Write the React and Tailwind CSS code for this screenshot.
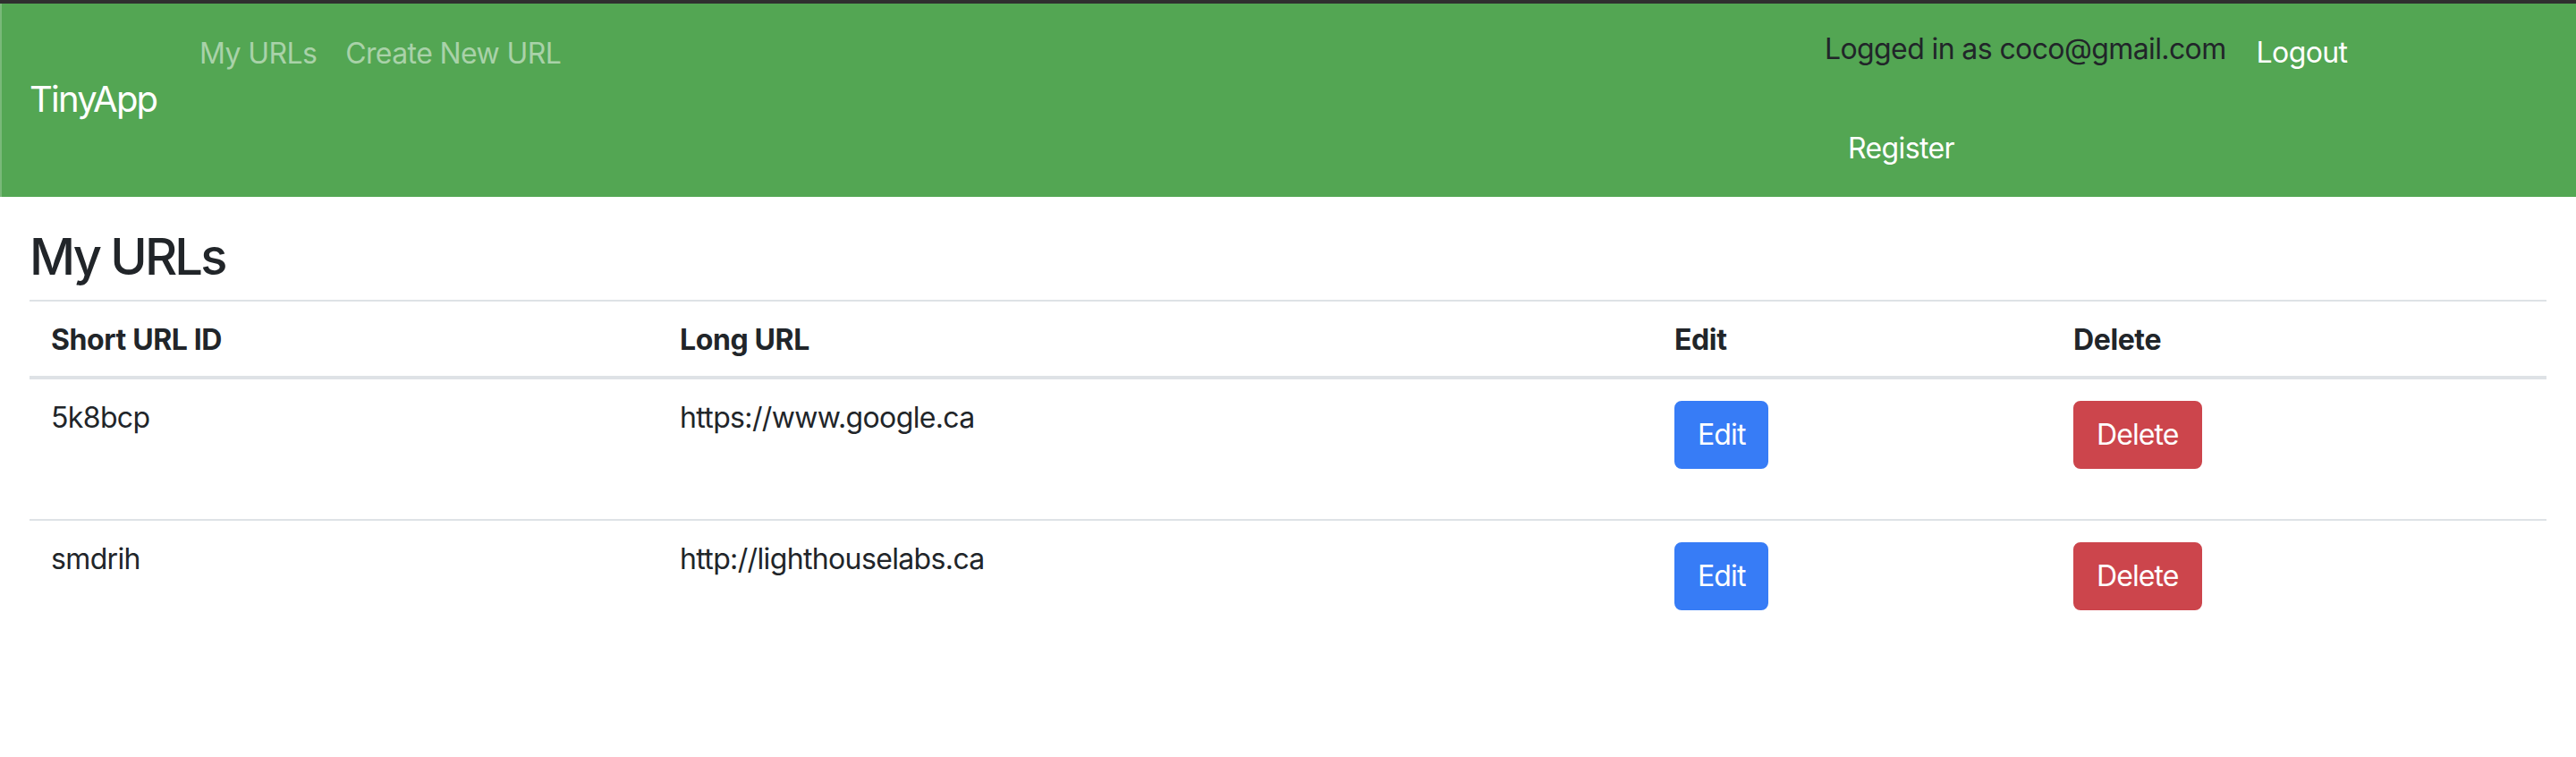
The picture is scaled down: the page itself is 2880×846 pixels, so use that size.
import React from "react";

const cols = "grid grid-cols-[703px_1112px_446px_554px]";

function Row({ id, url }) {
  return (
    <div className={`${cols} border-b-2 border-[#dee2e6] last:border-b-0 tracking-[-0.04em]`}>
      <div className="pl-[24px] pt-[19px] text-[32px] leading-[48px]">{id}</div>
      <div className="pl-[24px] pt-[19px] text-[32px] leading-[48px]">{url}</div>
      <div className="pl-[24px] pt-[24px] pb-[56px]">
        <button className="h-[76px] px-[24px] rounded-[8px] bg-[#377cf6] border-2 border-[#377cf6] text-white text-[32px] leading-[48px] tracking-[-0.028em]">
          Edit
        </button>
      </div>
      <div className="pl-[24px] pt-[24px] pb-[56px]">
        <button className="h-[76px] px-[24px] rounded-[8px] bg-[#cc454c] border-2 border-[#cc454c] text-white text-[32px] leading-[48px] tracking-[-0.028em]">
          Delete
        </button>
      </div>
    </div>
  );
}

export default function App() {
  return (
    <div
      className="w-[2880px] min-h-[846px] bg-white text-[#212529]"
      style={{ fontFamily: "Inter, 'Liberation Sans', sans-serif" }}
    >
      <div className="h-[4px] bg-[#2f2f2f]" />
      <nav className="flex h-[216px] bg-[#53a653] border-l-2 border-[#79b979] pl-[31px] pr-[32px] tracking-[-0.038em]">
        <div className="self-center w-[174px] text-white text-[40px] leading-[60px] mt-[-2px] tracking-[-0.045em]">
          TinyApp
        </div>
        <ul className="flex self-start pt-[32px]">
          <li className="px-[16px] text-[32px] leading-[48px] text-[#a9d2a9]">My URLs</li>
          <li className="px-[16px] text-[32px] leading-[48px] text-[#a9d2a9]">Create New URL</li>
        </ul>
        <div className="flex-1" />
        <div className="w-[808px] self-start pt-[27px]">
          <div className="flex items-start">
            <span className="text-[32px] leading-[48px] text-[#212529]">Logged in as coco@gmail.com</span>
            <span className="ml-[34px] mt-[4px] text-[32px] leading-[48px] text-white">Logout</span>
          </div>
          <div className="pl-[26px] pt-[59px] text-[32px] leading-[48px] text-white">Register</div>
        </div>
      </nav>
      <main className="px-[33px]">
        <h3 className="pt-[34px] text-[56px] leading-[67px] font-medium tracking-[-0.05em]">My URLs</h3>
        <div className="mt-[14px] border-t-2 border-[#dee2e6]">
          <div className={`${cols} border-b-4 border-[#dee2e6] font-bold text-[32px] leading-[48px] tracking-[-0.012em]`}>
            <div className="pl-[24px] pt-[19px] pb-[16px]">Short URL ID</div>
            <div className="pl-[24px] pt-[19px] pb-[16px]">Long URL</div>
            <div className="pl-[24px] pt-[19px] pb-[16px]">Edit</div>
            <div className="pl-[24px] pt-[19px] pb-[16px]">Delete</div>
          </div>
          <Row id="5k8bcp" url="https://www.google.ca" />
          <Row id="smdrih" url="http://lighthouselabs.ca" />
        </div>
      </main>
    </div>
  );
}
